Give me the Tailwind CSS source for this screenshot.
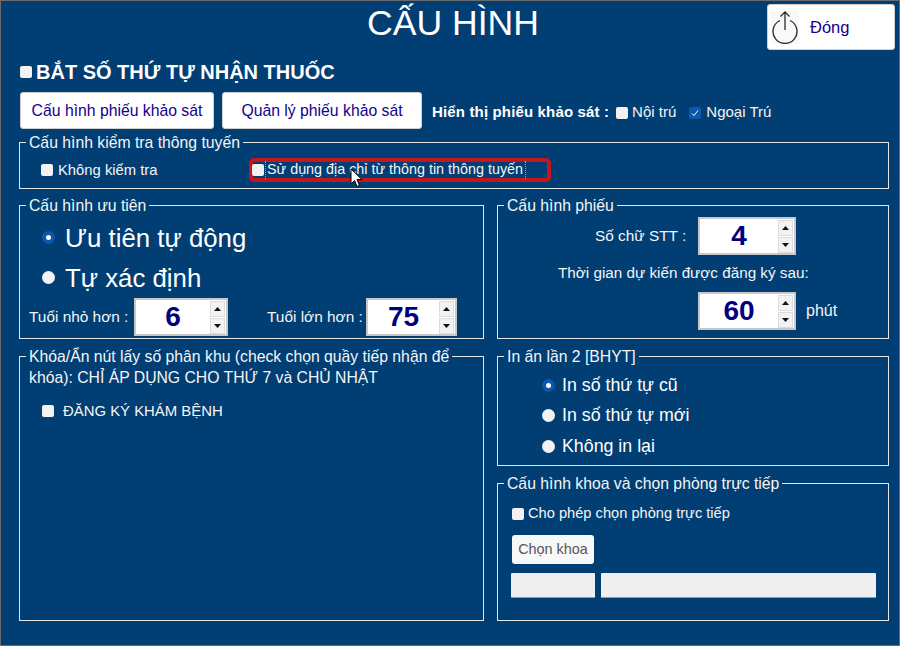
<!DOCTYPE html>
<html lang="en">
<head>
    <meta charset="UTF-8">
    <meta name="viewport" content="width=device-width, initial-scale=1.0">
    <title>Cấu hình</title>
    <script src="https://cdn.jsdelivr.net/npm/@tailwindcss/browser@4"></script>
</head>
<body class="bg-[#003e74]">
    <div class="relative w-[900px] h-[646px] overflow-hidden border border-[#6b6b6b] bg-[#003e74] text-[#f5f5f5] font-['Liberation_Sans',Arial,sans-serif] text-[15.75px]">

        <!-- Header -->
        <div class="flex h-[49px]">
            <h1 class="ml-[366px] text-[35.6px] leading-[44px] text-white">CẤU HÌNH</h1>
            <button class="ml-auto mr-[4px] mt-[3px] w-[128px] h-[46px] flex items-center bg-white rounded-[3px] border border-[#d0d0d0] text-[#14008c] text-[16.5px]">
                <svg class="ml-[3px] w-[28px] h-[33px] bg-[#f9f9f9]" viewBox="3 2 28 33" fill="none" stroke="#2a2a2a" stroke-width="1.3">
                    <path d="M12 11.5 A12 12 0 1 0 22 11.5"/>
                    <path d="M17 21 V3 M12.5 7.5 L17 3 L21.5 7.5"/>
                </svg>
                <span class="ml-[11px]">Đóng</span>
            </button>
        </div>

        <!-- Bat so thu tu -->
        <div class="flex items-center h-[24px] mt-[10px] ml-[19px]">
            <input type="checkbox" class="appearance-none w-[12px] h-[12px] rounded-[2px] bg-[#f2f2f2]">
            <span class="ml-[4px] text-[20px] font-bold text-white">BẮT SỐ THỨ TỰ NHẬN THUỐC</span>
        </div>

        <!-- Phieu khao sat -->
        <div class="flex items-center h-[37px] mt-[8px] ml-[19px]">
            <button class="w-[194px] h-[37px] bg-white rounded-[3px] border border-[#d0d0d0] text-[#14008c] text-[15.75px]">Cấu hình phiếu khảo sát</button>
            <button class="ml-[8px] w-[200px] h-[37px] bg-white rounded-[3px] border border-[#d0d0d0] text-[#14008c] text-[15.75px]">Quản lý phiếu khảo sát</button>
            <div class="flex items-center pt-[4px] text-[15px]">
                <span class="ml-[10px] font-bold tracking-[0.15px] text-white">Hiển thị phiếu khảo sát :</span>
                <input type="checkbox" class="ml-[7px] appearance-none w-[12px] h-[12px] rounded-[2px] bg-[#f2f2f2]">
                <span class="ml-[4px]">Nội trú</span>
                <span class="ml-[13px] w-[12px] h-[12px] rounded-[2px] bg-[#0a58b0] flex items-center justify-center">
                    <svg class="w-[8px] h-[8px]" viewBox="0 0 8 8" fill="none" stroke="#fff" stroke-width="1"><path d="M1 4.5 L3 6.5 L7 1.5"/></svg>
                </span>
                <span class="ml-[5px]">Ngoại Trú</span>
            </div>
        </div>

        <!-- Kiem tra thong tuyen -->
        <fieldset class="ml-[18px] mt-[5px] w-[870px] h-[55px] border border-[#e6e6e6]">
            <legend class="ml-[6px] px-[3px] leading-[17px]">Cấu hình kiểm tra thông tuyến</legend>
            <div class="flex items-center h-[24px] mt-[7px] text-[14.8px]">
                <input type="checkbox" class="ml-[21px] appearance-none w-[12px] h-[12px] rounded-[2px] bg-[#f2f2f2]">
                <span class="ml-[5px] w-[191px]">Không kiểm tra</span>
                <label class="flex items-center w-[302px] h-[24px] border-4 border-[#c8141c] rounded-[5px] text-[14.35px]">
                    <input type="checkbox" class="appearance-none -ml-[1px] w-[12px] h-[12px] rounded-[2px] bg-[#f2f2f2]">
                    <span class="ml-[1px] pl-[1px] pr-[2px] h-[18px] shrink-0 leading-[17px] border-x border-dotted border-[#8fa8c0]">Sử dụng địa chỉ từ thông tin thông tuyến</span>
                </label>
            </div>
        </fieldset>

        <!-- Two columns -->
        <div class="grid grid-cols-[465px_392px] gap-x-[13px] ml-[18px] mt-[8px]">
            <div class="flex flex-col gap-[9px]">
                <fieldset class="h-[142px] border border-[#e6e6e6]">
                    <legend class="ml-[6px] px-[3px] leading-[17px]">Cấu hình ưu tiên</legend>
                    <div class="flex items-center h-[40px] mt-[3px] text-[25.8px] text-white">
                        <span class="ml-[22px] w-[13px] h-[13px] rounded-full bg-[#0a58b0] flex items-center justify-center"><span class="w-[5px] h-[5px] rounded-full bg-white"></span></span>
                        <span class="ml-[10px] mt-[3px]">Ưu tiên tự động</span>
                    </div>
                    <div class="flex items-center h-[40px] text-[25.8px] text-white">
                        <span class="ml-[22px] w-[13px] h-[13px] rounded-full bg-[#f2f2f2]"></span>
                        <span class="ml-[10px] mt-[2px]">Tự xác định</span>
                    </div>
                    <div class="flex items-center h-[38px] mt-[1px] text-[15.4px]">
                        <span class="ml-[9px] w-[105px]">Tuổi nhỏ hơn :</span>
                        <div class="flex items-center w-[94px] h-[38px] bg-white border-2 border-[#c8c8c8]">
                            <span class="flex-1 text-center text-[28px] font-bold text-[#000080]">6</span>
                            <div class="flex flex-col gap-[1px] mr-[1px]">
                                <span class="flex items-center justify-center w-[15px] h-[16px] bg-[#f2f2f2] border border-[#dcdcdc]"><svg class="w-[7px] h-[4px]" viewBox="0 0 7 4"><path d="M3.5 0 L7 4 H0 Z" fill="#111"/></svg></span>
                                <span class="flex items-center justify-center w-[15px] h-[16px] bg-[#f2f2f2] border border-[#dcdcdc]"><svg class="w-[7px] h-[4px]" viewBox="0 0 7 4"><path d="M0 0 H7 L3.5 4 Z" fill="#111"/></svg></span>
                            </div>
                        </div>
                        <span class="ml-[39px] w-[99px]">Tuổi lớn hơn :</span>
                        <div class="flex items-center w-[91px] h-[38px] bg-white border-2 border-[#c8c8c8]">
                            <span class="flex-1 text-center text-[28px] font-bold text-[#000080]">75</span>
                            <div class="flex flex-col gap-[1px] mr-[1px]">
                                <span class="flex items-center justify-center w-[15px] h-[16px] bg-[#f2f2f2] border border-[#dcdcdc]"><svg class="w-[7px] h-[4px]" viewBox="0 0 7 4"><path d="M3.5 0 L7 4 H0 Z" fill="#111"/></svg></span>
                                <span class="flex items-center justify-center w-[15px] h-[16px] bg-[#f2f2f2] border border-[#dcdcdc]"><svg class="w-[7px] h-[4px]" viewBox="0 0 7 4"><path d="M0 0 H7 L3.5 4 Z" fill="#111"/></svg></span>
                            </div>
                        </div>
                    </div>
                </fieldset>

                <fieldset class="h-[273px] border border-[#e6e6e6]">
                    <legend class="ml-[6px] px-[3px] leading-[17px] whitespace-nowrap">Khóa/Ẩn nút lấy số phân khu (check chọn quầy tiếp nhận để</legend>
                    <p class="ml-[9px] mt-[4px] leading-[17px]">khóa): CHỈ ÁP DỤNG CHO THỨ 7 và CHỦ NHẬT</p>
                    <div class="flex items-center h-[18px] mt-[16px] text-[14.9px]">
                        <input type="checkbox" class="ml-[22px] appearance-none w-[12px] h-[12px] rounded-[2px] bg-[#f2f2f2]">
                        <span class="ml-[9px]">ĐĂNG KÝ KHÁM BỆNH</span>
                    </div>
                </fieldset>
            </div>

            <div class="flex flex-col gap-[9px]">
                <fieldset class="h-[142px] border border-[#e6e6e6]">
                    <legend class="ml-[6px] px-[3px] leading-[17px]">Cấu hình phiếu</legend>
                    <div class="flex items-center h-[38px] mt-[3px] text-[15.4px]">
                        <span class="ml-[97px] w-[103px]">Số chữ STT :</span>
                        <div class="flex items-center w-[98px] h-[38px] bg-white border-2 border-[#c8c8c8]">
                            <span class="flex-1 text-center text-[28px] font-bold text-[#000080]">4</span>
                            <div class="flex flex-col gap-[1px] mr-[1px]">
                                <span class="flex items-center justify-center w-[15px] h-[16px] bg-[#f2f2f2] border border-[#dcdcdc]"><svg class="w-[7px] h-[4px]" viewBox="0 0 7 4"><path d="M3.5 0 L7 4 H0 Z" fill="#111"/></svg></span>
                                <span class="flex items-center justify-center w-[15px] h-[16px] bg-[#f2f2f2] border border-[#dcdcdc]"><svg class="w-[7px] h-[4px]" viewBox="0 0 7 4"><path d="M0 0 H7 L3.5 4 Z" fill="#111"/></svg></span>
                            </div>
                        </div>
                    </div>
                    <p class="ml-[60px] mt-[8px] h-[29px] leading-[20px] text-[15.25px]">Thời gian dự kiến được đăng ký sau:</p>
                    <div class="flex items-center h-[38px]">
                        <div class="ml-[200px] flex items-center w-[98px] h-[38px] bg-white border-2 border-[#c8c8c8]">
                            <span class="flex-1 text-center text-[28px] font-bold text-[#000080]">60</span>
                            <div class="flex flex-col gap-[1px] mr-[1px]">
                                <span class="flex items-center justify-center w-[15px] h-[16px] bg-[#f2f2f2] border border-[#dcdcdc]"><svg class="w-[7px] h-[4px]" viewBox="0 0 7 4"><path d="M3.5 0 L7 4 H0 Z" fill="#111"/></svg></span>
                                <span class="flex items-center justify-center w-[15px] h-[16px] bg-[#f2f2f2] border border-[#dcdcdc]"><svg class="w-[7px] h-[4px]" viewBox="0 0 7 4"><path d="M0 0 H7 L3.5 4 Z" fill="#111"/></svg></span>
                            </div>
                        </div>
                        <span class="ml-[10px] -mt-[1px] text-[16px]">phút</span>
                    </div>
                </fieldset>

                <fieldset class="h-[118px] border border-[#e6e6e6]">
                    <legend class="ml-[6px] px-[3px] leading-[17px]">In ấn lần 2 [BHYT]</legend>
                    <div class="flex items-center h-[30px] mt-[5px] text-[17.8px] text-white">
                        <span class="ml-[44px] w-[13px] h-[13px] rounded-full bg-[#0a58b0] flex items-center justify-center"><span class="w-[5px] h-[5px] rounded-full bg-white"></span></span>
                        <span class="ml-[7px]">In số thứ tự cũ</span>
                    </div>
                    <div class="flex items-center h-[30px] text-[17.8px] text-white">
                        <span class="ml-[44px] w-[13px] h-[13px] rounded-full bg-[#f2f2f2]"></span>
                        <span class="ml-[7px]">In số thứ tự mới</span>
                    </div>
                    <div class="flex items-center h-[30px] mt-[1px] text-[17.8px] text-white">
                        <span class="ml-[44px] w-[13px] h-[13px] rounded-full bg-[#f2f2f2]"></span>
                        <span class="ml-[7px]">Không in lại</span>
                    </div>
                </fieldset>

                <fieldset class="h-[146px] border border-[#e6e6e6]">
                    <legend class="ml-[6px] px-[3px] leading-[17px]">Cấu hình khoa và chọn phòng trực tiếp</legend>
                    <div class="flex items-center h-[18px] mt-[13px] text-[14.65px]">
                        <input type="checkbox" class="ml-[14px] appearance-none w-[12px] h-[12px] rounded-[2px] bg-[#f2f2f2]">
                        <span class="ml-[4px]">Cho phép chọn phòng trực tiếp</span>
                    </div>
                    <button class="block ml-[14px] mt-[12px] w-[82px] h-[29px] bg-[#f8f8f8] rounded-[3px] text-[14.4px] text-[#555555]">Chọn khoa</button>
                    <div class="flex gap-[6px] ml-[13px] mt-[9px]">
                        <input type="text" class="w-[84px] h-[25px] bg-[#efefef] border-b border-[#9a9a9a] rounded-[1px]">
                        <input type="text" class="w-[275px] h-[25px] bg-[#efefef] border-b border-[#9a9a9a] rounded-[1px]">
                    </div>
                </fieldset>
            </div>
        </div>

        <!-- Mouse cursor -->
        <svg class="absolute left-[349px] top-[167px] w-[13px] h-[21px]" viewBox="0 0 13 21">
            <path d="M1 1 V16 L4.5 12.5 L7 18.5 L9.5 17.5 L7 11.5 H12 Z" fill="#fff" stroke="#000" stroke-width="1"/>
        </svg>
    </div>
</body>
</html>
